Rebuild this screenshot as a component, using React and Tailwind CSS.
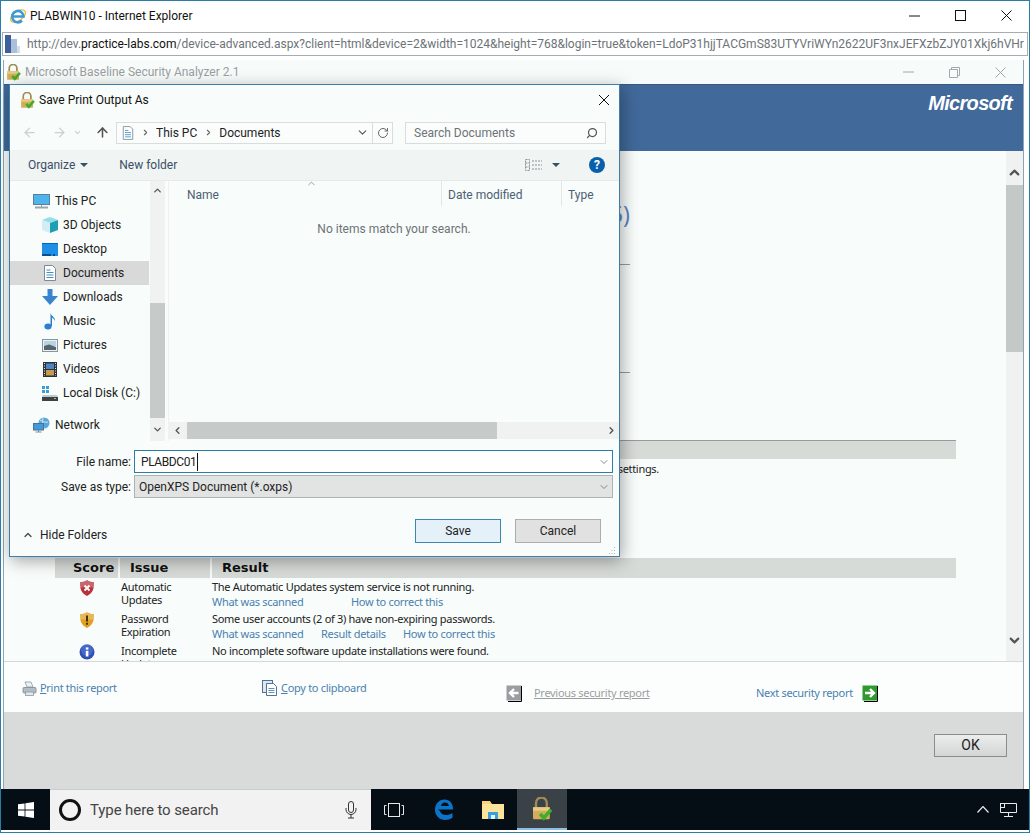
import { ArrowLeft, ArrowRight, ArrowUp, ChevronDown, ChevronUp, ChevronLeft, ChevronRight, RotateCw, Search } from 'lucide-react';

const Lock = ({ size = 20 }) => (
  <svg width={size} height={size} viewBox="0 0 20 20" className="shrink-0">
    <path d="M5 9V5a4.500 4.500 0 0 1 9 0v4" fill="none" stroke="#a08a55" strokeWidth="2" />
    <rect x="2.500" y="8.500" width="14" height="10" rx="1" fill="#d2ae5c" />
    <rect x="2.500" y="8.500" width="14" height="3" fill="#e6cb85" />
    <path d="M8.500 14l3 3.500 6-7" fill="none" stroke="#3fae2a" strokeWidth="3" />
  </svg>
);

const IeLogo = () => (
  <svg width="18" height="18" viewBox="0 0 18 18" className="shrink-0">
    <ellipse cx="9" cy="9" rx="8.500" ry="4.500" fill="none" stroke="#e8b83c" strokeWidth="1.300" transform="rotate(-35 9 9)" />
    <path d="M3.500 9.500h11a5.700 5.700 0 1 0-1.500 4" fill="none" stroke="#3c9ad6" strokeWidth="2.600" />
  </svg>
);

const PageIcon = () => (
  <svg width="18" height="20" viewBox="0 0 18 20" className="shrink-0">
    <rect x="2" y="1" width="6" height="18" fill="#3d5f9c" />
    <rect x="8" y="5" width="6" height="14" fill="#a9bfdc" />
    <rect x="14" y="12" width="3" height="7" fill="#d5dde8" />
  </svg>
);

const DocIcon = ({ w = 14, h = 16 }) => (
  <svg width={w} height={h} viewBox="0 0 14 16" className="shrink-0">
    <path d="M1.500.5h8l3 3v12h-11z" fill="#fff" stroke="#7d8a96" />
    <path d="M3.500 5h4M3.500 7.500h7M3.500 10h7M3.500 12.500h7" stroke="#3f8fc4" strokeWidth="1" />
  </svg>
);

const PcIcon = () => (
  <svg width="17" height="15" viewBox="0 0 17 15">
    <rect x="0.500" y="0.500" width="16" height="10" fill="#4fb4ec" stroke="#5a7f99" />
    <path d="M2 13.500h13" stroke="#9aa6ad" strokeWidth="2" />
    <path d="M8.500 11v2" stroke="#9aa6ad" />
  </svg>
);

const CubeIcon = () => (
  <svg width="16" height="16" viewBox="0 0 16 16">
    <path d="M8 0l8 3-8 3-8-3z" fill="#8fe0ea" />
    <path d="M0 3l8 3v10l-8-3z" fill="#d2eef2" />
    <path d="M16 3L8 6v10l8-3z" fill="#1e9fb4" />
  </svg>
);

const DesktopIcon = () => (
  <svg width="16" height="13" viewBox="0 0 16 13">
    <rect width="16" height="13" fill="#1d8fe6" />
    <rect x="0" y="0" width="16" height="1" fill="#0c65ac" />
    <path d="M0 12h16" stroke="#0a4e8a" strokeWidth="2" strokeDasharray="9 2 2 3" />
  </svg>
);

const DownloadIcon = () => (
  <svg width="16" height="16" viewBox="0 0 16 16">
    <path d="M5.500 0h5v7H16l-8 9-8-9h5.500z" fill="#3a83cf" />
  </svg>
);

const MusicIcon = () => (
  <svg width="12" height="17" viewBox="0 0 12 17">
    <ellipse cx="4" cy="13.500" rx="3.600" ry="3" fill="#2b7fd0" />
    <path d="M6.500 13V0c.5 3 5 4 4.500 8-.6-2-2.500-3-3-3.500V13z" fill="#2b7fd0" />
  </svg>
);

const PicturesIcon = () => (
  <svg width="16" height="13" viewBox="0 0 16 13">
    <rect x="0.500" y="0.500" width="15" height="12" fill="#eef2f4" stroke="#8a949a" />
    <rect x="2" y="2" width="12" height="5" fill="#b8d4e4" />
    <path d="M2 7l5-1.500L14 8v3H2z" fill="#56646c" />
  </svg>
);

const FilmIcon = () => (
  <svg width="14" height="15" viewBox="0 0 14 15">
    <rect width="14" height="15" fill="#2d3238" />
    <rect x="3" y="1.500" width="8" height="5.500" fill="#4c86c2" />
    <rect x="3" y="8" width="8" height="5.500" fill="#c79b4a" />
    <path d="M1.500 1v13M12.500 1v13" stroke="#e5e7e9" strokeDasharray="1 1.500" />
  </svg>
);

const DiskIcon = () => (
  <svg width="16" height="15" viewBox="0 0 16 15">
    <rect x="0" y="0" width="3" height="3" fill="#3a9fd8" />
    <rect x="4" y="0" width="3" height="3" fill="#3a9fd8" />
    <rect x="0" y="4" width="3" height="3" fill="#3a9fd8" />
    <rect x="4" y="4" width="3" height="3" fill="#3a9fd8" />
    <path d="M1 9h14l1 2H0z" fill="#c2c8cc" />
    <rect x="0" y="11" width="16" height="4" fill="#3c4246" />
    <rect x="12" y="12" width="2" height="1" fill="#8fd06a" />
  </svg>
);

const NetworkIcon = () => (
  <svg width="17" height="16" viewBox="0 0 17 16">
    <circle cx="11" cy="6" r="5.500" fill="#59a8dc" />
    <path d="M7 3c3 1 4 3 8 2M10 1c-1 3 0 7 1 10" stroke="#cfe6f4" fill="none" />
    <rect x="0.500" y="6.500" width="10" height="6.500" fill="#3f9ae0" stroke="#4e7289" />
    <path d="M2.500 15h6M5.500 13v2" stroke="#7c8d98" />
  </svg>
);

const ScoreIcon = ({ type }) => {
  if (type === 'info') {
    return (
      <svg width="16" height="16" viewBox="0 0 16 16">
        <circle cx="8" cy="8" r="7.500" fill="#2f4fb4" />
        <circle cx="8" cy="6" r="6" fill="#5f82d8" opacity=".5" />
        <rect x="6.800" y="6.800" width="2.600" height="5.700" fill="#fff" />
        <rect x="6.800" y="3.400" width="2.600" height="2.200" fill="#fff" />
      </svg>
    );
  }
  const fill = type === 'error' ? '#b8323c' : '#e0a020';
  return (
    <svg width="14" height="16" viewBox="0 0 14 16">
      <path d="M7 0c2 1.500 4 2 7 2 0 7-1 11-7 14C1 13 0 9 0 2c3 0 5-.5 7-2z" fill={fill} />
      <path d="M7 0c2 1.500 4 2 7 2 0 2 0 4-.4 5.500H.4C0 6 0 4 0 2c3 0 5-.5 7-2z" fill="#fff" opacity=".25" />
      {type === 'error'
        ? <path d="M4.500 5.500l5 5M9.500 5.500l-5 5" stroke="#fff" strokeWidth="1.800" />
        : <path d="M7 3.500v6M7 10.800v2" stroke="#4a3208" strokeWidth="2" />}
    </svg>
  );
};

const ReportArrow = ({ left, fill }) => (
  <svg width="16" height="17" viewBox="0 0 16 17" className="shrink-0">
    <rect x="0.500" y="0.500" width="15" height="15" fill={fill} />
    <path d="M15.500 1v15.500H2" fill="none" stroke="#000" />
    <path d={left ? 'M12.500 8H5M8 4L4 8l4 4' : 'M3 8h7.500M8 4l4 4-4 4'} fill="none" stroke="#fff" strokeWidth="2.400" />
  </svg>
);

const PrinterIcon = () => (
  <svg width="15" height="15" viewBox="0 0 15 15" className="shrink-0">
    <path d="M3 1h6l2 5H5z" fill="#eef1f4" stroke="#8b98a5" strokeWidth=".8" />
    <rect x="1" y="6.500" width="13" height="5.500" rx="1" fill="#b3bdc6" stroke="#7a8691" strokeWidth=".8" />
    <rect x="3.500" y="11" width="8" height="3.500" fill="#e3e8ec" stroke="#8b98a5" strokeWidth=".8" />
  </svg>
);

const ClipIcon = () => (
  <svg width="15" height="16" viewBox="0 0 15 16" className="shrink-0">
    <rect x="0.500" y="0.500" width="10" height="12" fill="#dfe7ef" stroke="#4f7398" />
    <path d="M4.500 3.500h7l3 3v9h-10z" fill="#fff" stroke="#4f7398" />
    <path d="M6.500 8.500h6M6.500 10.500h6M6.500 12.500h6" stroke="#6a8fb4" />
  </svg>
);

const tree = [
  { label: 'This PC', icon: <PcIcon />, depth: 0 },
  { label: '3D Objects', icon: <CubeIcon />, depth: 1 },
  { label: 'Desktop', icon: <DesktopIcon />, depth: 1 },
  { label: 'Documents', icon: <DocIcon />, depth: 1, active: true },
  { label: 'Downloads', icon: <DownloadIcon />, depth: 1 },
  { label: 'Music', icon: <MusicIcon />, depth: 1 },
  { label: 'Pictures', icon: <PicturesIcon />, depth: 1 },
  { label: 'Videos', icon: <FilmIcon />, depth: 1 },
  { label: 'Local Disk (C:)', icon: <DiskIcon />, depth: 1 },
];

const TreeRow = ({ label, icon, depth, active }) => (
  <div className={`h-6 mr-px flex items-center ${depth ? 'pl-[31px]' : 'pl-[23px]'} ${active ? 'bg-[#d9d9d9]' : ''}`}>
    <span className="w-[17px] mr-[5px] flex justify-center">{icon}</span>
    <span>{label}</span>
  </div>
);

const Links = ({ items }) => (
  <div className="flex text-[#4a7fb0] h-[14px] leading-[14px] mt-[2px]">
    {items.map(([label, w]) => <span key={label} className={w}>{label}</span>)}
  </div>
);

const SaveDialog = () => (
  <div className="absolute left-[8px] top-[83px] w-[611px] h-[473px] border border-[#3f7ea6] bg-[#f8fcfa] shadow-[2px_4px_16px_rgba(0,0,0,0.35)] flex flex-col text-[12px] text-[#3b4148]">
    <div className="h-[30px] flex items-center pl-[9px] pr-[9px] text-[#111]">
      <Lock size={17} />
      <span className="ml-[3px]">Save Print Output As</span>
      <svg className="ml-auto" width="12" height="12" viewBox="0 0 12 12">
        <path d="M1 1l10 10M11 1L1 11" stroke="#111" strokeWidth="1" />
      </svg>
    </div>
    <div className="h-[35px] flex items-center pl-[12px]">
      <ArrowLeft size={15} strokeWidth={2} className="text-[#ccd0d0]" />
      <ArrowRight size={15} strokeWidth={2} className="text-[#ccd0d0] ml-[15px]" />
      <ChevronDown size={9} strokeWidth={3} className="text-[#ccd0d0] ml-[6px]" />
      <ArrowUp size={15} strokeWidth={2.500} className="text-[#555] ml-[13px]" />
      <div className="ml-[6px] w-[277px] h-[22px] border border-[#d9dddc] bg-[#fbfdfc] flex items-center pl-[5px]">
        <DocIcon w={12} h={14} />
        <ChevronRight size={9} strokeWidth={3} className="text-[#666] ml-[7px]" />
        <span className="ml-[6px] text-[#222]">This PC</span>
        <ChevronRight size={9} strokeWidth={3} className="text-[#666] ml-[7px]" />
        <span className="ml-[6px] text-[#222]">Documents</span>
        <ChevronDown size={13} strokeWidth={2} className="text-[#555] ml-auto mr-[3px]" />
        <div className="w-[20px] h-full border-l border-[#d9dddc] flex items-center justify-center">
          <RotateCw size={12} strokeWidth={2} className="text-[#666]" />
        </div>
      </div>
      <div className="ml-[12px] w-[201px] h-[22px] border border-[#d9dddc] bg-[#fbfdfc] flex items-center pl-[8px] pr-[7px] text-[#6d7378]">
        <span>Search Documents</span>
        <Search size={12} strokeWidth={2.500} className="ml-auto text-[#555] -scale-x-100" />
      </div>
    </div>
    <div className="h-[31px] bg-[#f0f4f3] border-b border-[#e6eaea] flex items-center pl-[18px] pr-[14px] text-[#3a4f66]">
      <span>Organize</span>
      <span className="ml-[5px] w-0 h-0 border-x-[4px] border-x-transparent border-t-[4px] border-t-[#3a4f66]" />
      <span className="ml-[31px]">New folder</span>
      <svg className="ml-auto" width="17" height="12" viewBox="0 0 17 12">
        <path d="M.5.5h4v11h-4zM.5 4h4M.5 8h4M7 2h10M7 6h10M7 10h10" fill="none" stroke="#8a9097" strokeDasharray="2 1" />
      </svg>
      <span className="ml-[10px] w-0 h-0 border-x-[4px] border-x-transparent border-t-[4px] border-t-[#3a4f66]" />
      <span className="ml-[29px] w-[16px] h-[16px] rounded-full bg-[#0860ac] text-white font-bold text-[12px] leading-[16px] text-center">?</span>
    </div>
    <div className="h-[260px] flex">
      <div className="w-[140px] pt-[8px] text-[#222] flex flex-col">
        {tree.map((row) => <TreeRow key={row.label} {...row} />)}
        <div className="mt-[8px]">
          <TreeRow label="Network" icon={<NetworkIcon />} depth={0} />
        </div>
      </div>
      <div className="w-[15px] bg-[#f0f2f1] flex flex-col items-center">
        <ChevronUp size={11} strokeWidth={3} className="text-[#555] mt-[4px]" />
        <div className="w-full h-[115px] bg-[#c6cac8] mt-[107px]" />
        <ChevronDown size={11} strokeWidth={3} className="text-[#555] mt-[6px]" />
      </div>
      <div className="flex-1 ml-[3px] border-l border-[#eef1f0] flex flex-col relative">
        <div className="h-[25px] flex text-[#4c6074] leading-[28px]">
          <span className="w-[273px] pl-[18px] border-r border-[#e3e7e6] h-full">Name</span>
          <span className="w-[120px] pl-[6px] border-r border-[#e3e7e6] h-full">Date modified</span>
          <span className="pl-[6px]">Type</span>
        </div>
        <ChevronUp size={11} strokeWidth={1.500} className="absolute left-[137px] top-[-3px] text-[#777]" />
        <div className="flex-1 text-center text-[#6d7378] pt-[14px]">No items match your search.</div>
        <div className="h-[17px] mb-[2px] bg-[#f0f2f1] flex items-center">
          <ChevronLeft size={11} strokeWidth={3} className="text-[#555] ml-[3px]" />
          <div className="w-[310px] h-full bg-[#c6cac8] ml-[4px]" />
          <ChevronRight size={11} strokeWidth={3} className="text-[#555] ml-auto mr-[2px]" />
        </div>
      </div>
    </div>
    <div className="pt-[9px] pl-[3px] text-[#222]">
      <div className="flex items-center h-[23px]">
        <span className="w-[118px] text-right">File name:</span>
        <div className="ml-[3px] w-[479px] h-[23px] border border-[#2b7ea5] bg-white flex items-center pl-[6px]">
          <span className="border-r border-[#111] pr-[1px] tracking-[-0.4px]">PLABDC01</span>
          <ChevronDown size={12} strokeWidth={1.500} className="ml-auto mr-[2px] text-[#666]" />
        </div>
      </div>
      <div className="flex items-center h-[23px] mt-[2px]">
        <span className="w-[118px] text-right">Save as type:</span>
        <div className="ml-[3px] w-[479px] h-[23px] border border-[#adb2b2] bg-[#e2e4e3] flex items-center pl-[4px]">
          <span>OpenXPS Document (*.oxps)</span>
          <ChevronDown size={12} strokeWidth={1.500} className="ml-auto mr-[2px] text-[#666]" />
        </div>
      </div>
    </div>
    <div className="flex-1 flex relative">
      <div className="flex items-center self-start mt-[28px] ml-[12px] w-[96px]">
        <ChevronUp size={12} strokeWidth={2.500} className="text-[#444]" />
        <span className="ml-[6px] text-[#222]">Hide Folders</span>
      </div>
      <button className="ml-[297px] mt-[21px] w-[86px] h-[24px] border border-[#3a87b2] bg-[#e5f1f8] text-[#222]">Save</button>
      <button className="ml-[14px] mt-[21px] w-[86px] h-[24px] border border-[#adadad] bg-[#e1e1e1] text-[#222]">Cancel</button>
      <svg className="absolute right-[3px] bottom-[1px]" width="9" height="9" viewBox="0 0 9 9">
        <path d="M7 1h1v1H7zM4.500 4h1v1h-1zM7 4h1v1H7zM2 7h1v1H2zM4.500 7h1v1h-1zM7 7h1v1H7z" fill="#b5bab9" />
      </svg>
    </div>
  </div>
);

const Report = () => (
  <div className="h-[510px] flex bg-[#f8fcfa] overflow-hidden">
    <div className="flex-1 overflow-hidden text-[11px] text-[#222] [font-family:'Noto_Sans',sans-serif] tracking-[-0.3px]">
      <div className="w-[626px] pt-[50px] text-right text-[23px] leading-[26px] tracking-normal text-[#5e84c4]">5)</div>
      <div className="ml-[51px] w-[575px] h-px bg-[#9a9a9a] mt-[37px]" />
      <div className="ml-[51px] w-[575px] h-px bg-[#9a9a9a] mt-[107px]" />
      <div className="ml-[51px] w-[901px] h-[19px] bg-[#d7dbd8] border-t border-[#9a9a9a] mt-[67px]" />
      <div className="w-[655px] text-right mt-[3px] leading-[14px]">settings.</div>
      <div className="ml-[51px] w-[901px] h-[20px] mt-[82px] grid grid-cols-[63px_90px_1fr] gap-x-[2px] bg-[#d7dbd8] font-bold text-[13px] text-[#111] leading-[20px] tracking-normal [font-family:'DejaVu_Sans',sans-serif]">
        <span className="pl-[18px]">Score</span>
        <span className="border-l-2 border-[#f8fcfa] pl-[10px] -ml-[2px]">Issue</span>
        <span className="border-l-2 border-[#f8fcfa] pl-[10px] -ml-[2px]">Result</span>
      </div>
      <div className="ml-[51px] w-[901px] grid grid-cols-[63px_90px_1fr] gap-x-[2px] mt-[2px] leading-[13px]">
        <div className="h-[32px] flex justify-center"><ScoreIcon type="error" /></div>
        <div className="pl-[1px]">Automatic<br />Updates</div>
        <div>
          <div>The Automatic Updates system service is not running.</div>
          <Links items={[['What was scanned', 'w-[139px]'], ['How to correct this', '']]} />
        </div>
        <div className="h-[32px] flex justify-center"><ScoreIcon type="warning" /></div>
        <div className="pl-[1px]">Password<br />Expiration</div>
        <div>
          <div>Some user accounts (2 of 3) have non-expiring passwords.</div>
          <Links items={[['What was scanned', 'w-[109px]'], ['Result details', 'w-[82px]'], ['How to correct this', '']]} />
        </div>
        <div className="h-[32px] flex justify-center"><ScoreIcon type="info" /></div>
        <div className="pl-[1px]">Incomplete<br />Updates</div>
        <div>
          <div>No incomplete software update installations were found.</div>
          <Links items={[['What was scanned', 'w-[109px]']]} />
        </div>
      </div>
    </div>
    <div className="w-[17px] bg-[#f0f2f1] flex flex-col items-center">
      <ChevronUp size={15} strokeWidth={3.500} className="text-[#555] mt-[14px]" />
      <div className="w-full h-[167px] bg-[#c4c9c7] mt-[5px]" />
      <ChevronDown size={15} strokeWidth={3.500} className="text-[#555] mt-auto mb-[13px]" />
    </div>
  </div>
);

export default function App() {
  return (
    <div className="relative w-[1030px] h-[833px] border border-[#2b7ca6] bg-white flex flex-col overflow-hidden [font-family:Roboto,sans-serif]">
      <div className="h-[31px] flex items-center pl-[8px] pb-[2px] text-[12px] text-[#111]">
        <IeLogo />
        <span className="ml-[3px]">PLABWIN10 - Internet Explorer</span>
        <div className="ml-auto flex items-center">
          <svg width="11" height="2" viewBox="0 0 11 2"><path d="M0 1h11" stroke="#111" /></svg>
          <svg className="ml-[35px]" width="11" height="11" viewBox="0 0 11 11"><rect x=".5" y=".5" width="10" height="10" fill="none" stroke="#111" /></svg>
          <svg className="ml-[35px] mr-[17px]" width="11" height="11" viewBox="0 0 11 11"><path d="M.5.5l10 10M10.500.5l-10 10" stroke="#111" /></svg>
        </div>
      </div>
      <div className="mx-[1px] h-[24px] border border-[#a6adb0] flex items-center text-[12px] text-[#6d7378] whitespace-nowrap overflow-hidden">
        <PageIcon />
        <span className="ml-[6px]">http://dev.<span className="text-[#111]">practice-labs.com</span>/device-advanced.aspx?client=html&amp;device=2&amp;width=1024&amp;height=768&amp;login=true&amp;token=LdoP31hjjTACGmS83UTYVriWYn2622UF3nxJEFXzbZJY01Xkj6hVHr</span>
      </div>
      <div className="mt-[4px] ml-[2px] mr-[5px] h-[729px] border-x border-[#8da4b5] flex flex-col">
        <div className="h-[24px] shrink-0 bg-[#f7fbf9] flex items-center pl-px text-[12px] text-[#9a9fa3]">
          <Lock size={17} />
          <span className="ml-[3px]">Microsoft Baseline Security Analyzer 2.1</span>
          <div className="ml-auto flex items-center">
            <svg width="11" height="2" viewBox="0 0 11 2"><path d="M0 1h11" stroke="#a4a8aa" /></svg>
            <svg className="ml-[35px]" width="11" height="11" viewBox="0 0 11 11"><path d="M.5 2.500h8v8h-8zM2.500 2.500v-2h8v8h-2" fill="none" stroke="#a4a8aa" /></svg>
            <svg className="ml-[35px] mr-[17px]" width="11" height="11" viewBox="0 0 11 11"><path d="M.5.5l10 10M10.500.5l-10 10" stroke="#a4a8aa" /></svg>
          </div>
        </div>
        <div className="h-[67px] shrink-0 bg-[#41699a] border-t border-[#38597f] flex justify-end pt-[8px] pr-[11px] text-[20px] leading-[20px] font-bold italic text-white tracking-[-0.7px] [font-family:'Liberation_Sans',sans-serif]">
          Microsoft
        </div>
        <Report />
        <div className="h-[51px] shrink-0 bg-[#fcfefd] border-t border-[#d5d8d6] flex pl-[18px] text-[11px] text-[#4a7fb0] [font-family:'Noto_Sans',sans-serif] tracking-[-0.3px]">
          <div className="w-[240px] pt-[18px] flex items-center self-start">
            <PrinterIcon />
            <span className="ml-[3px]"><span className="underline">P</span>rint this report</span>
          </div>
          <div className="w-[244px] pt-[18px] flex items-center self-start">
            <ClipIcon />
            <span className="ml-[4px]"><span className="underline">C</span>opy to clipboard</span>
          </div>
          <div className="w-[250px] pt-[23px] flex items-center self-start text-[#9a9ea1]">
            <ReportArrow left fill="#9a9ea0" />
            <span className="ml-[12px] underline">Previous security report</span>
          </div>
          <div className="pt-[23px] flex items-center self-start">
            <span className="mr-[9px]">Next security report</span>
            <ReportArrow fill="#2f9a2f" />
          </div>
        </div>
        <div className="flex-1 bg-[#d8dbd9] flex justify-end pt-[22px] pr-[16px]">
          <button className="w-[73px] h-[23px] border border-[#8a8d8d] bg-gradient-to-b from-[#eceeed] to-[#d2d5d4] text-[14px] text-[#222]">OK</button>
        </div>
      </div>
      <div className="h-[41px] shrink-0 bg-[#060e15] flex items-center text-[#e8e8e8]">
        <div className="w-[49px] flex justify-center">
          <svg width="16" height="16" viewBox="0 0 16 16">
            <path d="M0 2.300l6.600-.9v6.200H0zM7.400 1.300L16 0v7.600H7.400zM0 8.400h6.600v6.200L0 13.700zM7.400 8.400H16V16l-8.600-1.300z" fill="#fff" />
          </svg>
        </div>
        <div className="w-[321px] h-full bg-[#f2f2f2] border-t border-[#c8cccc] flex items-center pl-[9px] text-[#444] text-[15px]">
          <span className="w-[22px] h-[22px] rounded-full border-[3px] border-[#111]" />
          <span className="ml-[9px] tracking-[-0.1px]">Type here to search</span>
          <svg className="ml-auto mr-[14px]" width="12" height="18" viewBox="0 0 12 18">
            <rect x="3.500" y=".5" width="5" height="11" rx="2.500" fill="none" stroke="#333" />
            <path d="M1 7v1.500a5 5 0 0 0 10 0V7M6 13.500V17M3 17h6" fill="none" stroke="#333" />
          </svg>
        </div>
        <div className="ml-[13px] w-[20px]">
          <svg width="20" height="14" viewBox="0 0 20 14">
            <rect x="4.500" y=".5" width="11" height="13" fill="none" stroke="#e8e8e8" />
            <path d="M2.500 2.500H.5v9h2M17.500 2.500h2v9h-2" fill="none" stroke="#e8e8e8" />
          </svg>
        </div>
        <div className="ml-[30px]">
          <svg width="22" height="23" viewBox="0 0 22 23">
            <path d="M4 11.500h15c.5-6-3.500-10-8.500-10C5 1.500 1 6 1 12c0 6 5 10 10 10 3.500 0 6-1 7.500-2.500v-4.500c-4 3-11.500 3-12.500-2zM7 8c.5-2.500 2-3.500 4-3.500s3.500 1 4 3.500z" fill="#0c74c8" fillRule="evenodd" />
          </svg>
        </div>
        <div className="ml-[26px]">
          <svg width="22" height="20" viewBox="0 0 22 20">
            <path d="M0 1h8l2 3h12v15H0z" fill="#f6d679" />
            <rect x="0" y="4" width="22" height="15" fill="#fbe59d" />
            <rect x="6" y="12" width="10" height="7" fill="#3aa0dc" />
            <rect x="9" y="15" width="4" height="4" fill="#e8f4fb" />
          </svg>
        </div>
        <div className="ml-[13px] w-[50px] h-full bg-[#3a4248] border-b-[2px] border-[#8cbfe0] flex items-center justify-center">
          <Lock size={24} />
        </div>
        <svg className="ml-auto" width="12" height="7" viewBox="0 0 12 7"><path d="M.5 6.500l5.500-6 5.500 6" fill="none" stroke="#e8e8e8" strokeWidth="1.200" /></svg>
        <svg className="ml-[11px] mr-[12px]" width="17" height="14" viewBox="0 0 17 14">
          <path d="M.5.5h16v9H.5zM8.500 9.500v3.500M4 13.500h9" fill="none" stroke="#e8e8e8" />
          <rect x=".5" y=".5" width="4" height="4" fill="#060e15" stroke="#e8e8e8" />
        </svg>
      </div>
      <SaveDialog />
    </div>
  );
}
